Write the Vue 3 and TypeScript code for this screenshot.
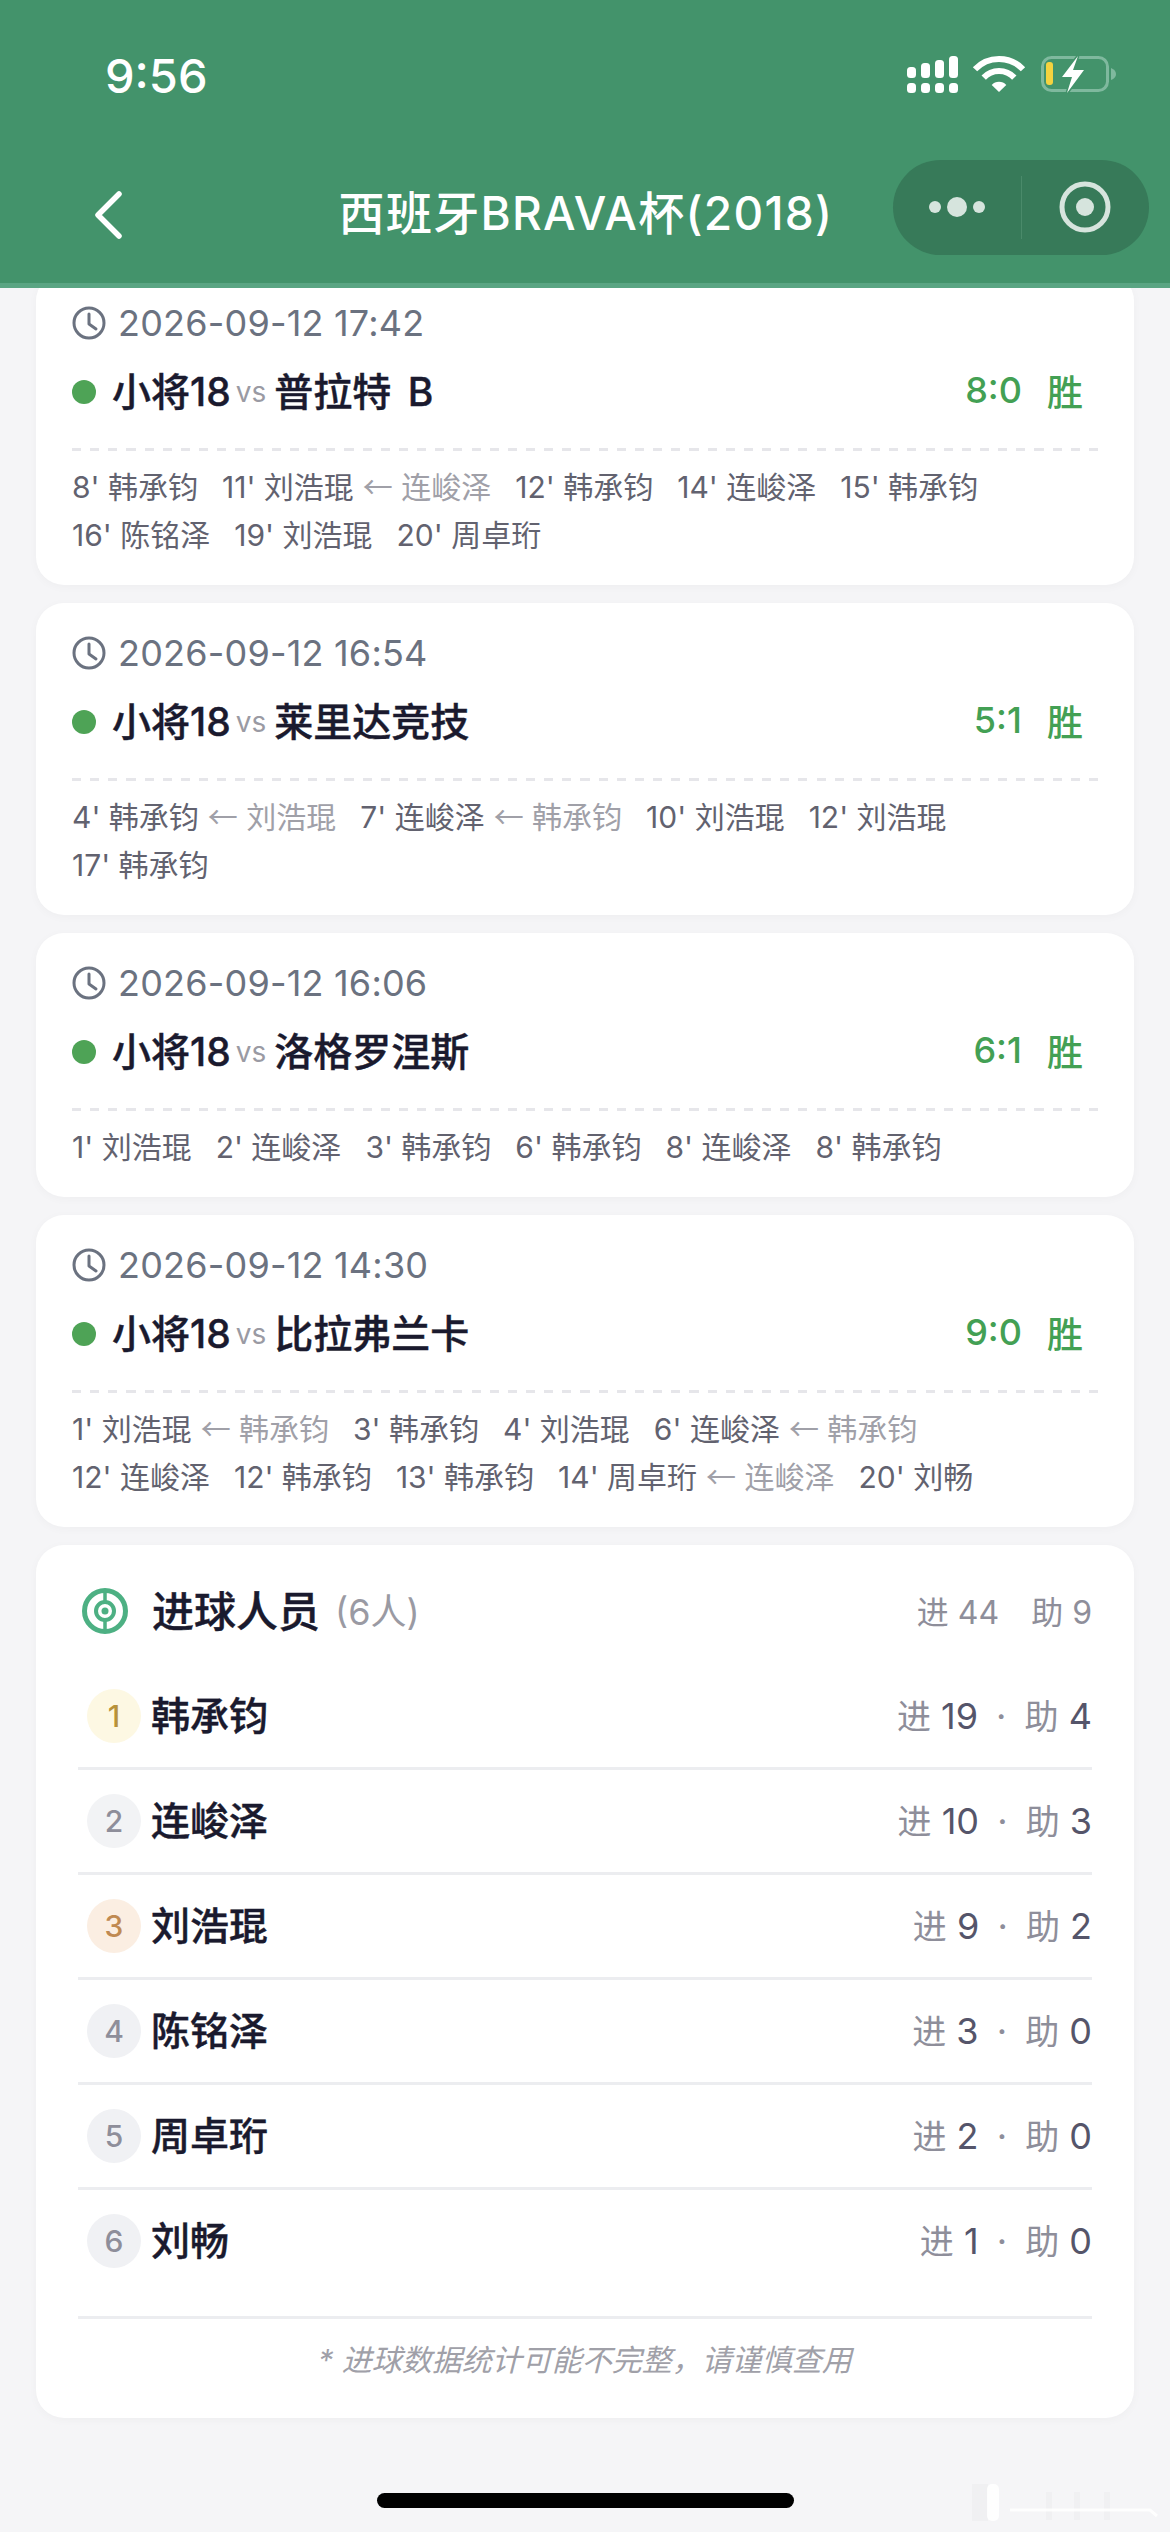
<script setup lang="ts">
interface Goal {
  min: string
  name: string
  assist?: string
}

interface Match {
  time: string
  opponent: string
  score: string
  goals: Goal[]
}

interface Scorer {
  name: string
  goals: number
  assists: number
  tone: string
}

const matches: Match[] = [
  {
    time: '2026-09-12 17:42',
    opponent: '普拉特 B',
    score: '8:0',
    goals: [
      { min: "8'", name: '韩承钧' },
      { min: "11'", name: '刘浩琨', assist: '连峻泽' },
      { min: "12'", name: '韩承钧' },
      { min: "14'", name: '连峻泽' },
      { min: "15'", name: '韩承钧' },
      { min: "16'", name: '陈铭泽' },
      { min: "19'", name: '刘浩琨' },
      { min: "20'", name: '周卓珩' },
    ],
  },
  {
    time: '2026-09-12 16:54',
    opponent: '莱里达竞技',
    score: '5:1',
    goals: [
      { min: "4'", name: '韩承钧', assist: '刘浩琨' },
      { min: "7'", name: '连峻泽', assist: '韩承钧' },
      { min: "10'", name: '刘浩琨' },
      { min: "12'", name: '刘浩琨' },
      { min: "17'", name: '韩承钧' },
    ],
  },
  {
    time: '2026-09-12 16:06',
    opponent: '洛格罗涅斯',
    score: '6:1',
    goals: [
      { min: "1'", name: '刘浩琨' },
      { min: "2'", name: '连峻泽' },
      { min: "3'", name: '韩承钧' },
      { min: "6'", name: '韩承钧' },
      { min: "8'", name: '连峻泽' },
      { min: "8'", name: '韩承钧' },
    ],
  },
  {
    time: '2026-09-12 14:30',
    opponent: '比拉弗兰卡',
    score: '9:0',
    goals: [
      { min: "1'", name: '刘浩琨', assist: '韩承钧' },
      { min: "3'", name: '韩承钧' },
      { min: "4'", name: '刘浩琨' },
      { min: "6'", name: '连峻泽', assist: '韩承钧' },
      { min: "12'", name: '连峻泽' },
      { min: "12'", name: '韩承钧' },
      { min: "13'", name: '韩承钧' },
      { min: "14'", name: '周卓珩', assist: '连峻泽' },
      { min: "20'", name: '刘畅' },
    ],
  },
]

const scorers: Scorer[] = [
  { name: '韩承钧', goals: 19, assists: 4, tone: 'gold' },
  { name: '连峻泽', goals: 10, assists: 3, tone: 'silver' },
  { name: '刘浩琨', goals: 9, assists: 2, tone: 'bronze' },
  { name: '陈铭泽', goals: 3, assists: 0, tone: '' },
  { name: '周卓珩', goals: 2, assists: 0, tone: '' },
  { name: '刘畅', goals: 1, assists: 0, tone: '' },
]
</script>

<template>
  <div class="page">
    <header class="nav">
      <div class="status">
        <span class="clock">9:56</span>
        <svg class="status-icons" width="210" height="40" viewBox="0 0 210 40">
          <g fill="#fff">
            <rect x="0" y="28" width="9" height="10" rx="3.5" />
            <rect x="14" y="28" width="9" height="10" rx="3.5" />
            <rect x="28" y="28" width="9" height="10" rx="3.5" />
            <rect x="42" y="28" width="9" height="10" rx="3.5" />
            <rect x="0" y="12" width="9" height="11" rx="3.5" />
            <rect x="14" y="8" width="9" height="15" rx="3.5" />
            <rect x="28" y="5" width="9" height="18" rx="3.5" />
            <rect x="42" y="1" width="9" height="22" rx="3.5" />
          </g>
          <g fill="none" stroke="#fff" stroke-width="6">
            <path d="M68 14.300A33 33 0 0 1 116 14.300" />
            <path d="M76.700 22.600A21 21 0 0 1 107.300 22.600" />
          </g>
          <path d="M92 37 84.700 30A10 10 0 0 1 99.300 30Z" fill="#fff" />
          <rect x="135.500" y="2.500" width="65" height="33" rx="9" fill="none" stroke="#7fb99e" stroke-width="3" />
          <path d="M204 13q5 2 5 6t-5 6z" fill="#7fb99e" />
          <rect x="139" y="7" width="7" height="23" rx="3" fill="#f5d33f" />
          <path d="M171 1 155 22h10l-5 16 17-23h-11z" fill="#fff" stroke="#43936b" stroke-width="3" paint-order="stroke" />
        </svg>
      </div>
      <div class="bar">
        <svg class="back" width="30" height="48" viewBox="0 0 30 48">
          <path d="M26 3 5 24l21 21" fill="none" stroke="#fff" stroke-width="5.500" stroke-linecap="round" stroke-linejoin="round" />
        </svg>
        <h1 class="title">西班牙BRAVA杯(2018)</h1>
        <div class="capsule">
          <div class="cap-btn">
            <i class="dot" />
            <i class="dot big" />
            <i class="dot" />
          </div>
          <div class="cap-sep" />
          <div class="cap-btn">
            <svg width="52" height="52" viewBox="0 0 52 52">
              <circle cx="26" cy="26" r="23" fill="none" stroke="#d6e4dd" stroke-width="5" />
              <circle cx="26" cy="26" r="9" fill="#d6e4dd" />
            </svg>
          </div>
        </div>
      </div>
    </header>

    <main class="list">
      <section v-for="m in matches" :key="m.time" class="card match">
        <div class="time">
          <svg width="34" height="34" viewBox="0 0 34 34">
            <circle cx="17" cy="17" r="15" fill="none" stroke="#6b7280" stroke-width="3" />
            <path d="M17 8v10l7 5" fill="none" stroke="#6b7280" stroke-width="3" stroke-linecap="round" stroke-linejoin="round" />
          </svg>
          <span>{{ m.time }}</span>
        </div>
        <div class="teams">
          <i class="win-dot" />
          <span class="team">小将18</span>
          <span class="vs">vs</span>
          <span class="team">{{ m.opponent }}</span>
          <span class="score">{{ m.score }}</span>
          <span class="result">胜</span>
        </div>
        <div class="goals">
          <span v-for="(g, i) in m.goals" :key="i" class="goal">
            {{ g.min }} {{ g.name }}<span v-if="g.assist" class="assist"><span class="arrow">←</span> {{ g.assist }}</span>
          </span>
        </div>
      </section>

      <section class="card scorers">
        <div class="sc-head">
          <svg width="46" height="46" viewBox="0 0 46 46">
            <circle cx="23" cy="23" r="20.500" fill="none" stroke="#4db083" stroke-width="5" />
            <circle cx="23" cy="23" r="9" fill="none" stroke="#4db083" stroke-width="4" />
            <circle cx="23" cy="23" r="3.500" fill="#4db083" />
            <path d="M23 3v11M23 32v11" stroke="#4db083" stroke-width="3.500" />
          </svg>
          <span class="sc-title">进球人员</span>
          <span class="sc-count">(6人)</span>
          <span class="sc-total">进 44</span>
          <span class="sc-total">助 9</span>
        </div>
        <div v-for="(p, i) in scorers" :key="p.name" class="sc-row">
          <span class="rank" :class="p.tone">{{ i + 1 }}</span>
          <span class="sc-name">{{ p.name }}</span>
          <span class="sc-stat">
            <em>进</em> {{ p.goals }} <b>·</b> <em>助</em> {{ p.assists }}
          </span>
        </div>
        <p class="note">* 进球数据统计可能不完整&#xFF0C;请谨慎查用</p>
      </section>
    </main>

    <div class="home-bar" />
    <svg class="mark" width="220" height="62" viewBox="0 0 220 62">
      <rect x="22" y="14" width="16" height="37" fill="#ececee" opacity="0.5" />
      <rect x="37" y="14" width="12" height="37" rx="5" fill="#fff" opacity="0.85" />
      <g fill="#f0f0f2">
        <rect x="96" y="22" width="6" height="28" />
        <rect x="124" y="22" width="6" height="28" />
        <rect x="154" y="22" width="6" height="28" />
      </g>
      <path d="M60 40H200l7 6" fill="none" stroke="#fff" stroke-width="3" opacity="0.85" />
    </svg>
  </div>
</template>

<style scoped>
.page {
  position: relative;
  width: 1170px;
  height: 2532px;
  overflow: hidden;
  background: #f5f5f7;
  font-family: Inter, "Noto Sans CJK SC", sans-serif;
}

.nav {
  position: relative;
  z-index: 2;
  height: 283px;
  background: #43936b;
  border-bottom: 5px solid #5aa583;
  color: #fff;
}

.status {
  display: flex;
  justify-content: space-between;
  align-items: center;
  height: 150px;
  padding: 0 53px 0 105px;
}

.clock {
  font-size: 47px;
  font-weight: 500;
}

.status-icons {
  overflow: visible;
}

.bar {
  display: flex;
  align-items: center;
  height: 96px;
  padding: 0 21px 0 93px;
  margin-top: 9px;
}

.back {
  flex: none;
  margin-top: 16px;
}

.title {
  flex: 1;
  margin: 0;
  padding: 5px 0 0 156px;
  font-size: 46px;
  font-weight: 500;
  letter-spacing: 1.3px;
  text-align: center;
  white-space: nowrap;
}

.capsule {
  display: flex;
  align-items: center;
  width: 256px;
  height: 95px;
  flex: none;
  border-radius: 48px;
  background: #377a59;
}

.cap-btn {
  flex: 1;
  display: flex;
  align-items: center;
  justify-content: center;
  gap: 6px;
}

.cap-sep {
  width: 1px;
  height: 63px;
  background: #4a8a6a;
}

.dot {
  width: 12px;
  height: 12px;
  border-radius: 50%;
  background: #d6e4dd;
}

.dot.big {
  width: 20px;
  height: 20px;
}

.list {
  display: flex;
  flex-direction: column;
  gap: 18px;
  margin-top: -15px;
  padding: 0 36px;
}

.card {
  border-radius: 28px;
  background: #fff;
  box-shadow: 0 2px 10px rgba(0, 0, 0, 0.03);
}

.match {
  padding: 27px 36px 26px;
}

.time {
  display: flex;
  align-items: center;
  gap: 12px;
  height: 46px;
  font-size: 36px;
  letter-spacing: 0.2px;
  color: #6b7280;
}

.teams {
  display: flex;
  align-items: center;
  height: 56px;
  margin-top: 18px;
  padding-right: 15px;
  color: #1a1a2e;
}

.win-dot {
  width: 24px;
  height: 24px;
  margin-right: 16px;
  border-radius: 50%;
  background: #4ea356;
}

.team {
  padding-bottom: 6px;
  font-size: 39px;
  font-weight: 500;
  word-spacing: 6px;
  -webkit-text-stroke: 0.4px currentColor;
}

.vs {
  margin: 0 8px 0 5px;
  font-size: 28px;
  color: #9a9aa3;
}

.score {
  margin-left: auto;
  padding-bottom: 5px;
  font-size: 36px;
  font-weight: 500;
  color: #43a054;
}

.result {
  margin-left: 25px;
  padding-bottom: 5px;
  font-size: 36px;
  font-weight: 500;
  color: #43a054;
}

.goals {
  display: flex;
  flex-wrap: wrap;
  column-gap: 24px;
  margin-top: 28px;
  padding: 15px 50px 0 0;
  line-height: 48px;
  font-size: 30px;
  color: #62626f;
  background: repeating-linear-gradient(90deg, #e6e6ea 0 9.1px, transparent 9.1px 18.16px) top / 100% 3px no-repeat;
}

.assist {
  color: #a0a0a8;
}

.arrow {
  margin-left: 9px;
  line-height: 0;
  font-family: "Noto Sans CJK SC", sans-serif;
}

.scorers {
  padding: 40px 42px 38px;
}

.sc-head {
  display: flex;
  align-items: center;
  height: 52px;
  padding-left: 4px;
  margin-bottom: 28px;
}

.sc-title {
  margin-left: 24px;
  padding-bottom: 5px;
  font-size: 42px;
  font-weight: 500;
  color: #1a1a2e;
  -webkit-text-stroke: 0.4px currentColor;
}

.sc-count {
  margin-left: 15px;
  padding-bottom: 4px;
  font-size: 36px;
  color: #9a9aa3;
}

.sc-total {
  padding-bottom: 2px;
  font-size: 32px;
  color: #8e8e9a;
  margin-left: 32px;
}

.sc-count + .sc-total {
  margin-left: auto;
}

.sc-row {
  display: flex;
  align-items: center;
  height: 105px;
  border-bottom: 3px solid #ecedf0;
  box-sizing: border-box;
}

.rank {
  display: flex;
  align-items: center;
  justify-content: center;
  width: 54px;
  height: 54px;
  margin-left: 9px;
  border-radius: 50%;
  background: #f0f1f4;
  color: #8e8e9a;
  font-size: 30px;
  font-weight: 500;
}

.rank.gold {
  background: #fdf8e3;
  color: #b8923a;
}

.rank.silver {
  background: #f2f3f5;
}

.rank.bronze {
  background: #fbeee2;
  color: #c08a52;
}

.sc-name {
  margin-left: 10px;
  padding-bottom: 6px;
  font-size: 39px;
  font-weight: 500;
  color: #1a1a2e;
  -webkit-text-stroke: 0.4px currentColor;
}

.sc-stat {
  margin-left: auto;
  padding-bottom: 3px;
  font-size: 36px;
  color: #55556a;
}

.sc-stat em {
  font-style: normal;
  font-size: 34px;
  color: #8e8e9a;
}

.sc-stat b {
  margin: 0 8px;
  font-weight: 400;
  color: #8e8e9a;
}

.sc-row:last-of-type {
  height: 129px;
  padding-bottom: 24px;
}

.note {
  margin: 0;
  padding-top: 21px;
  font-size: 30px;
  font-style: italic;
  line-height: 40px;
  text-align: center;
  color: #a0a0a8;
}

.home-bar {
  position: absolute;
  left: 377px;
  bottom: 24px;
  width: 417px;
  height: 15px;
  border-radius: 8px;
  background: #000;
}

.mark {
  position: absolute;
  left: 950px;
  bottom: 0;
}
</style>
